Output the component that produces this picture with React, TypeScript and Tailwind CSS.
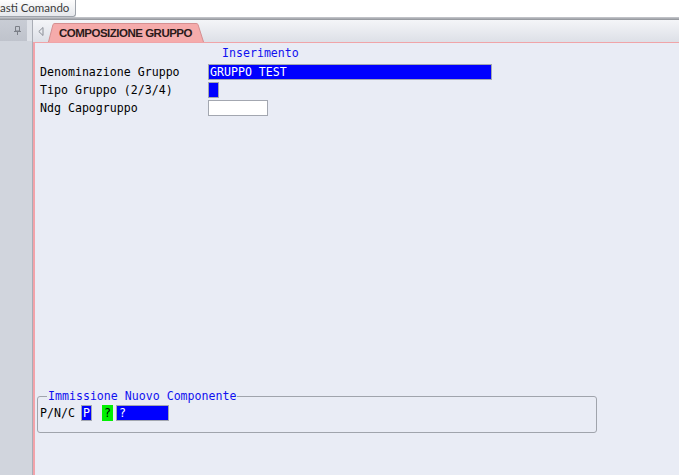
import React from 'react';

const mono = "font-['DejaVu_Sans_Mono','Liberation_Mono',monospace] text-[11.6px]";

const Field = ({ label, children }: { label: string; children: React.ReactNode }) => (
    <div className="flex items-center h-[16px]">
        <div className="w-[168px] text-black leading-[16px]">{label}</div>
        {children}
    </div>
);

export default function App() {
    return (
        <div className={`w-[679px] h-[475px] flex flex-col overflow-hidden bg-white ${mono}`}>
            {/* toolbar */}
            <div className="h-[17px] flex bg-white shrink-0">
                <div className="h-[17px] pr-[6px] border-r border-b border-[#9ea3ab] rounded-br-[3px] bg-gradient-to-b from-[#fdfdfd] to-[#e6e8ec] flex items-center">
                    <span className="whitespace-nowrap font-['Lato','Open_Sans',sans-serif] text-[11.5px] leading-[16px] text-[#3a3a3a]">asti Comando</span>
                </div>
            </div>
            <div className="h-[3px] shrink-0 bg-gradient-to-b from-[#c9cbd0] to-[#8f9298]" />

            <div className="flex flex-1 min-h-0">
                {/* left dock */}
                <div className="w-[32px] flex flex-col shrink-0 bg-[#d1d5dd]">
                    <div className="h-[21px] flex items-center justify-end pr-[6px] bg-gradient-to-b from-[#c9cdd5] to-[#bfc3cc] border-r-[5px] border-[#dfe2e8]">
                        <svg width="7" height="9" viewBox="0 0 7 9">
                            <path d="M1.5 0.5h4v4.5h-4z" fill="none" stroke="#7b7f87" />
                            <path d="M0 5.5h7M3.5 5.5v3.5" stroke="#7b7f87" />
                        </svg>
                    </div>
                </div>

                <div className="flex-1 flex flex-col min-w-0 border-l border-[#a9adb5]">
                    {/* tab bar */}
                    <div className="h-[22px] shrink-0 flex items-end bg-gradient-to-b from-[#f4f5f8] to-[#dde0e7]">
                        <div className="w-[15px] h-[22px] flex items-center justify-center">
                            <svg width="6" height="9" viewBox="0 0 6 9">
                                <path d="M5 0.5L0.8 4.5L5 8.5z" fill="none" stroke="#8a8e96" />
                            </svg>
                        </div>
                        <div className="relative h-[19px] w-[156px] flex items-center pl-[11px]">
                            <svg className="absolute inset-0" width="156" height="19" viewBox="0 0 156 19">
                                <path d="M0.5 19L5 1.5Q5.6 0.5 7 0.5H148Q149.4 0.5 150 1.5L155.5 19" fill="#f5abab" stroke="#d48f91" />
                            </svg>
                            <span className="relative font-['Liberation_Sans','Arial',sans-serif] font-bold text-[11.5px] tracking-[-0.5px] text-[#2a1a1a] leading-[14px]">COMPOSIZIONE GRUPPO</span>
                        </div>
                    </div>

                    {/* content */}
                    <div className="flex-1 flex flex-col bg-[#e9ecf5] border-t border-[#f0a4a8] border-l-2 border-l-[#f2a3aa] pt-[2px]">
                        <div className="h-[16px] leading-[16px] pl-[187px] text-[#1010f0]">Inserimento</div>
                        <div className="flex flex-col gap-[2px] mt-[3px] pl-[5px]">
                            <Field label="Denominazione Gruppo">
                                <div className="w-[284px] h-[16px] bg-[#0000ff] border border-[#a3a7b0] text-white leading-[14px] pl-[1px]">GRUPPO TEST</div>
                            </Field>
                            <Field label="Tipo Gruppo (2/3/4)">
                                <div className="w-[11px] h-[16px] bg-[#0000ff] border border-[#a3a7b0]" />
                            </Field>
                            <Field label="Ndg Capogruppo">
                                <div className="w-[60px] h-[16px] bg-white border border-[#a3a7b0]" />
                            </Field>
                        </div>

                        <fieldset className="mt-auto mb-[42px] ml-[2px] w-[560px] border border-[#a0a4ac] rounded-[3px] pl-[2px] pb-[11px]">
                            <legend className="ml-[7px] px-[1px] text-[#1010f0] leading-[16px]">Immissione Nuovo Componente</legend>
                            <div className="flex items-center h-[16px] mt-[1px]">
                                <span className="text-black leading-[16px]">P/N/C</span>
                                <div className="ml-[6px] w-[11px] h-[16px] bg-[#0000ff] border border-[#a3a7b0] text-white leading-[14px] text-center">P</div>
                                <div className="ml-[10px] w-[11px] h-[16px] bg-[#00f000] text-black leading-[16px] text-center">?</div>
                                <div className="ml-[3px] w-[53px] h-[16px] bg-[#0000ff] border border-[#a3a7b0] text-white leading-[14px] pl-[2px]">?</div>
                            </div>
                        </fieldset>
                    </div>
                </div>
            </div>
        </div>
    );
}
